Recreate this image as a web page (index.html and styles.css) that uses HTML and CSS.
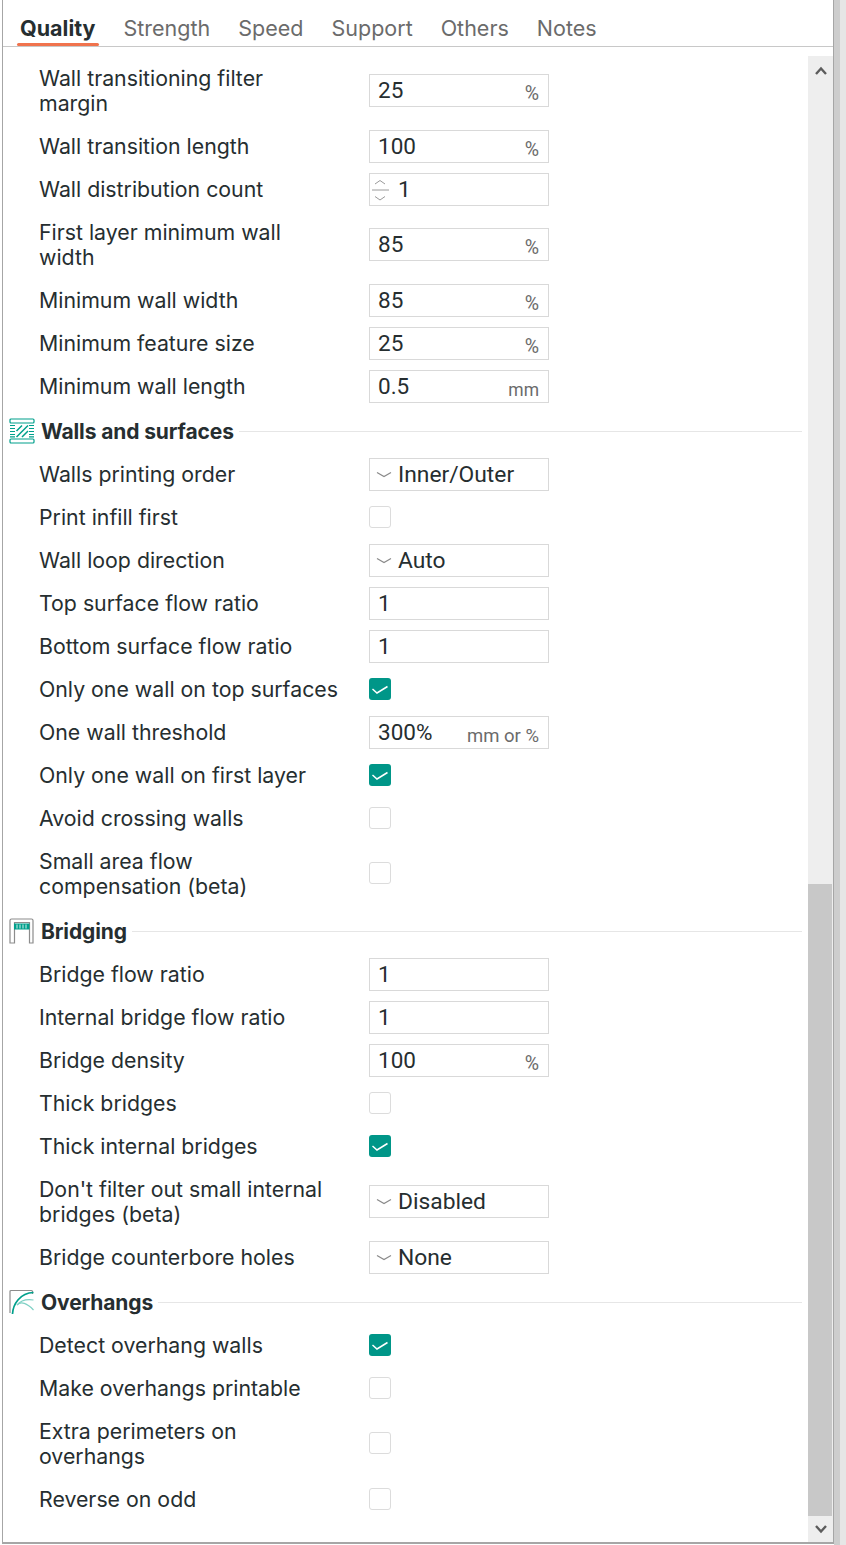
FILE: index.html
```html
<!DOCTYPE html>
<html lang="en">
<head>
<meta charset="utf-8">
<title>Quality settings</title>
<link rel="stylesheet" href="styles.css">
</head>
<body>
<div class="window">
  <div class="panel">
    <nav class="tabs">
      <span class="tab active">Quality</span>
      <span class="tab">Strength</span>
      <span class="tab">Speed</span>
      <span class="tab">Support</span>
      <span class="tab">Others</span>
      <span class="tab">Notes</span>
    </nav>
    <div class="body">
      <div class="content">
        <div class="row tall"><label>Wall transitioning filter<br>margin</label><div class="field"><span class="val">25</span><span class="unit">%</span></div></div>
        <div class="row"><label>Wall transition length</label><div class="field"><span class="val">100</span><span class="unit">%</span></div></div>
        <div class="row"><label>Wall distribution count</label><div class="field"><svg class="spin" viewBox="0 0 18 28"><path d="M4 8 9 4.500l5 3.500M1 14h17M4 20.500l5 3.500 5-3.500"/></svg><span class="val after">1</span></div></div>
        <div class="row tall"><label>First layer minimum wall<br>width</label><div class="field"><span class="val">85</span><span class="unit">%</span></div></div>
        <div class="row"><label>Minimum wall width</label><div class="field"><span class="val">85</span><span class="unit">%</span></div></div>
        <div class="row"><label>Minimum feature size</label><div class="field"><span class="val">25</span><span class="unit">%</span></div></div>
        <div class="row"><label>Minimum wall length</label><div class="field"><span class="val">0.5</span><span class="unit mm">mm</span></div></div>

        <div class="section">
          <svg class="icon" viewBox="0 0 26 26"><rect class="teal" x="1" y="1" width="24" height="4" rx="1"/><rect class="teal" x="1" y="21" width="24" height="4" rx="1"/><path class="teal" d="M1 7.500h5M1 10.500h5M1 13.500h5M1 16.500h5M1 18.800h5M20 7.500h5M20 10.500h5M20 13.500h5M20 16.500h5M20 18.800h5"/><path class="diag" d="M7.500 13 13 7.500M7.500 19 19 7.500M13 19l6-6"/></svg>
          <h3>Walls and surfaces</h3><span class="rule"></span>
        </div>
        <div class="row"><label>Walls printing order</label><div class="field"><svg class="drop" viewBox="0 0 16 8"><path d="M1 1.500 8 5.500l7-4"/></svg><span class="val after">Inner/Outer</span></div></div>
        <div class="row"><label>Print infill first</label><span class="check"></span></div>
        <div class="row"><label>Wall loop direction</label><div class="field"><svg class="drop" viewBox="0 0 16 8"><path d="M1 1.500 8 5.500l7-4"/></svg><span class="val after">Auto</span></div></div>
        <div class="row"><label>Top surface flow ratio</label><div class="field"><span class="val">1</span></div></div>
        <div class="row"><label>Bottom surface flow ratio</label><div class="field"><span class="val">1</span></div></div>
        <div class="row"><label>Only one wall on top surfaces</label><span class="check on"><svg viewBox="0 0 22 22"><path d="M3.500 11 8 15 18.500 8.500"/></svg></span></div>
        <div class="row"><label>One wall threshold</label><div class="field"><span class="val">300%</span><span class="unit mixed">mm or %</span></div></div>
        <div class="row"><label>Only one wall on first layer</label><span class="check on"><svg viewBox="0 0 22 22"><path d="M3.500 11 8 15 18.500 8.500"/></svg></span></div>
        <div class="row"><label>Avoid crossing walls</label><span class="check"></span></div>
        <div class="row tall"><label>Small area flow<br>compensation (beta)</label><span class="check"></span></div>

        <div class="section">
          <svg class="icon" viewBox="0 0 26 26"><path class="gray" d="M1 25V2.500A1.500 1.500 0 0 1 2.500 1h20A1.500 1.500 0 0 1 24 2.500V25h-3.500V4.500h-15V25z"/><rect class="fill" x="5" y="5.500" width="15.500" height="6"/><path class="comb" d="M8 6.500v4M11 6.500v4M14 6.500v4M17 6.500v4"/></svg>
          <h3>Bridging</h3><span class="rule"></span>
        </div>
        <div class="row"><label>Bridge flow ratio</label><div class="field"><span class="val">1</span></div></div>
        <div class="row"><label>Internal bridge flow ratio</label><div class="field"><span class="val">1</span></div></div>
        <div class="row"><label>Bridge density</label><div class="field"><span class="val">100</span><span class="unit">%</span></div></div>
        <div class="row"><label>Thick bridges</label><span class="check"></span></div>
        <div class="row"><label>Thick internal bridges</label><span class="check on"><svg viewBox="0 0 22 22"><path d="M3.500 11 8 15 18.500 8.500"/></svg></span></div>
        <div class="row tall"><label>Don't filter out small internal<br>bridges (beta)</label><div class="field"><svg class="drop" viewBox="0 0 16 8"><path d="M1 1.500 8 5.500l7-4"/></svg><span class="val after">Disabled</span></div></div>
        <div class="row"><label>Bridge counterbore holes</label><div class="field"><svg class="drop" viewBox="0 0 16 8"><path d="M1 1.500 8 5.500l7-4"/></svg><span class="val after">None</span></div></div>

        <div class="section">
          <svg class="icon" viewBox="0 0 26 26"><path class="gray" d="M1 24V2.500A1 1 0 0 1 2 1.500h20.500a1 1 0 0 1 1 1V5"/><path class="curve" d="M3.500 25C4 15 11 4 24.500 3.500"/><path class="curve light" d="M8 16C12 11 18 10 24.500 11"/><path class="curve light" d="M8 16C12 12 18 14 24.500 21"/></svg>
          <h3>Overhangs</h3><span class="rule"></span>
        </div>
        <div class="row"><label>Detect overhang walls</label><span class="check on"><svg viewBox="0 0 22 22"><path d="M3.500 11 8 15 18.500 8.500"/></svg></span></div>
        <div class="row"><label>Make overhangs printable</label><span class="check"></span></div>
        <div class="row tall"><label>Extra perimeters on<br>overhangs</label><span class="check"></span></div>
        <div class="row"><label>Reverse on odd</label><span class="check"></span></div>
      </div>
      <div class="scrollbar">
        <svg class="arrow up" viewBox="0 0 12 10"><path d="M1 8 6 2.500 11 8"/></svg>
        <div class="track"></div>
        <div class="thumb"></div>
        <svg class="arrow down" viewBox="0 0 12 10"><path d="M1 2 6 7.500 11 2"/></svg>
      </div>
    </div>
  </div>
  <div class="gutter"></div>
  <div class="gutter pale"></div>
</div>
</body>
</html>
```
FILE: styles.css
```css
* { box-sizing: border-box; }
html, body { margin: 0; padding: 0; background: #fff; }
body { width: 846px; height: 1545px; overflow: hidden; font-family: Inter, "Noto Sans", sans-serif; color: #262e30; }
.window { display: flex; height: 1545px; padding-left: 2px; }
.panel { width: 832px; height: 1544px; border-left: 1px solid #a6a6a6; border-right: 1px solid #a6a6a6; border-bottom: 2px solid #a6a6a6; display: flex; flex-direction: column; background: #fff; }
.gutter { width: 6px; background: #cdcdcd; }
.gutter.pale { background: #e6e6e6; }
.tabs { height: 47px; flex: none; display: flex; gap: 28px; align-items: flex-start; padding: 14px 0 0 17px; border-bottom: 1px solid #c8c8c8; }
.tab { font-size: 21.500px; line-height: 28px; color: #6b6b6b; }
.tab.active { font-weight: 700; color: #262e30; position: relative; }
.tab.active::after { content: ""; position: absolute; left: -3px; right: -3px; top: 29px; height: 3px; border-radius: 2px; background: #f0734d; }
.body { flex: 1; min-height: 0; display: flex; }
.content { flex: 1; min-width: 0; padding: 15px 6px 0 6px; display: flex; flex-direction: column; gap: 10px; overflow: hidden; }
.row { flex: none; height: 33px; display: flex; align-items: center; padding-left: 30px; }
.row.tall { height: 57px; margin-bottom: 1px; }
.row label { width: 330px; flex: none; font-size: 21.300px; line-height: 25px; white-space: nowrap; }
.field { width: 180px; height: 33px; border: 1px solid #d9d9d9; display: flex; align-items: center; padding: 0 9px 0 8px; }
.val { font-family: Roboto, sans-serif; font-size: 22.500px; margin-bottom: 2px; color: #262e30; flex: none; }
.val.after { margin-left: 6px; margin-bottom: 0; font-size: 22.800px; }
.unit { margin-left: auto; font-family: Roboto, sans-serif; font-size: 19.500px; color: #6b6b6b; position: relative; top: 3px; }
.unit.mm { font-size: 17.500px; }
.unit.mixed { font-size: 18.500px; }
.spin { width: 18px; height: 28px; margin-left: -7px; margin-right: 3px; flex: none; fill: none; stroke: #9a9a9a; stroke-width: 1; }
.drop { width: 16px; height: 8px; margin-left: -2px; flex: none; fill: none; stroke: #8a8a8a; stroke-width: 1.200; }
.check { width: 22px; height: 22px; margin-bottom: 1px; border: 1px solid #dcdcdc; border-radius: 3px; background: #fff; flex: none; }
.check.on { background: #009688; border: none; }
.check svg { display: block; width: 22px; height: 22px; fill: none; stroke: #fff; stroke-width: 1.500; }
.section { flex: none; height: 35px; display: flex; align-items: center; gap: 7px; }
.section h3 { margin: 2px -2px 0 -1px; flex: none; font-size: 21px; letter-spacing: -0.12px; font-weight: 700; color: #262e30; }
.rule { flex: 1; height: 1px; margin-top: 1px; background: #e6e6e6; }
.icon { width: 26px; height: 26px; flex: none; fill: none; }
.icon .teal { stroke: #00a08c; fill: none; stroke-width: 1.200; }
.icon .diag { stroke: #00a08c; stroke-width: 1.500; }
.icon .gray { stroke: #8c8c8c; stroke-width: 1.200; fill: none; }
.icon .fill { fill: #00a08c; stroke: none; }
.icon .comb { stroke: #d5efeb; stroke-width: 1; }
.icon .curve { stroke: #00a08c; stroke-width: 1.700; }
.icon .curve.light { stroke: #7ed0c4; stroke-width: 1.200; }
.scrollbar { width: 25px; flex: none; display: flex; flex-direction: column; align-items: flex-start; margin-top: 9px; background: #eeeeee; }
.arrow { width: 12px; height: 10px; flex: none; margin-left: 7px; fill: none; stroke: #5c5c5c; stroke-width: 2.400; }
.arrow.up { margin-top: 10px; margin-bottom: 9px; }
.arrow.down { margin-top: 8px; margin-bottom: 8px; }
.track { height: 799px; flex: none; }
.thumb { width: 24px; flex: 1; background: #c8c8c8; }
```
